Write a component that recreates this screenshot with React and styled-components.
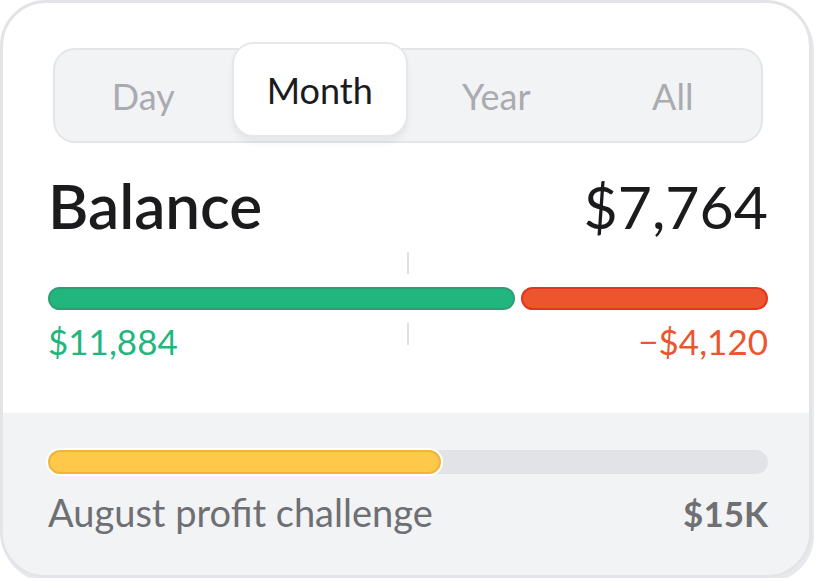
import React from 'react';
import styled, { createGlobalStyle } from 'styled-components';

const GlobalStyle = createGlobalStyle`
    body {
        margin: 0;
        background: #ffffff;
        font-family: Lato, "Noto Sans", sans-serif;
    }
`;

const Card = styled.div`
    box-sizing: border-box;
    width: 812px;
    height: 578px;
    border: 3px solid #e3e4e8;
    border-radius: 46px;
    box-shadow: 2px 4px 0 #e8e9ec;
    overflow: hidden;
    display: flex;
    flex-direction: column;
    background: #ffffff;
`;

const Top = styled.div`
    padding: 45px 41px 0 45px;
    height: 410px;
    box-sizing: border-box;
    flex-shrink: 0;
`;

const Tabs = styled.div`
    box-sizing: border-box;
    margin: 0 5px;
    height: 95px;
    display: grid;
    grid-template-columns: repeat(4, 1fr);
    background: #f2f3f5;
    border: 2px solid #e4e5e9;
    border-radius: 22px;
`;

const Tab = styled.div`
    box-sizing: border-box;
    display: flex;
    align-items: center;
    justify-content: center;
    font-size: 36px;
    color: ${(p) => (p.$active ? '#1b1b1d' : '#a9abb0')};
    ${(p) =>
        p.$active &&
        `
        background: #ffffff;
        border: 2px solid #e6e7ea;
        border-radius: 22px;
        height: calc(100% + 4px);
        margin: -2px 0;
        transform: translateY(-6px);
        box-shadow: 0 6px 6px rgba(0, 0, 0, 0.05);
    `}
`;

const Header = styled.div`
    display: flex;
    justify-content: space-between;
    align-items: baseline;
    margin-top: 31px;
    line-height: 1;
`;

const Title = styled.div`
    font-size: 62px;
    font-weight: 600;
    color: #1b1b1d;
`;

const Amount = styled.div`
    font-size: 59px;
    color: #1b1b1d;
`;

const TickRow = styled.div`
    display: flex;
    justify-content: center;
    margin-top: 16px;
`;

const Tick = styled.div`
    width: 2px;
    height: 22px;
    background: #dfe0e4;
`;

const Bars = styled.div`
    display: flex;
    gap: 6px;
    margin-top: 13px;
`;

const Bar = styled.div`
    box-sizing: border-box;
    height: 23px;
    border-radius: 12px;
    flex: ${(p) => p.$grow};
    background: ${(p) => p.$fill};
    border: 2px solid ${(p) => p.$edge};
`;

const Labels = styled.div`
    display: grid;
    grid-template-columns: 1fr auto 1fr;
    align-items: start;
    margin-top: 13px;
`;

const Figure = styled.div`
    font-size: 35px;
    line-height: 1;
    margin-top: 1px;
    color: ${(p) => p.$color};
    text-align: ${(p) => p.$align || 'left'};
`;

const Bottom = styled.div`
    flex: 1;
    background: #f2f3f5;
    padding: 37px 41px 0 45px;
`;

const Track = styled.div`
    height: 24px;
    border-radius: 12px;
    background: #e2e3e6;
    display: flex;
`;

const Fill = styled.div`
    box-sizing: border-box;
    height: 100%;
    border-radius: 12px;
    background: #fec84b;
    border: 2px solid #f1b43a;
    box-shadow: 0 0 0 2px #ffffff;
`;

const Footer = styled.div`
    display: flex;
    justify-content: space-between;
    align-items: baseline;
    margin-top: 15px;
    font-size: 38px;
    color: #6e6f73;
`;

const Goal = styled.span`
    font-size: 35px;
    font-weight: 700;
    color: #6f7074;
`;

export default function App() {
    const progress = 393 / 720;
    return (
        <>
            <GlobalStyle />
            <Card>
                <Top>
                    <Tabs>
                        <Tab>Day</Tab>
                        <Tab $active>Month</Tab>
                        <Tab>Year</Tab>
                        <Tab>All</Tab>
                    </Tabs>
                    <Header>
                        <Title>Balance</Title>
                        <Amount>$7,764</Amount>
                    </Header>
                    <TickRow>
                        <Tick />
                    </TickRow>
                    <Bars>
                        <Bar $grow={468} $fill="#22b67f" $edge="#329c76" />
                        <Bar $grow={246} $fill="#ec552e" $edge="#e3341f" />
                    </Bars>
                    <Labels>
                        <Figure $color="#22b67f">$11,884</Figure>
                        <Tick />
                        <Figure $color="#ec552e" $align="right">−$4,120</Figure>
                    </Labels>
                </Top>
                <Bottom>
                    <Track>
                        <Fill style={{ width: `${progress * 100}%` }} />
                    </Track>
                    <Footer>
                        <span>August profit challenge</span>
                        <Goal>$15K</Goal>
                    </Footer>
                </Bottom>
            </Card>
        </>
    );
}
